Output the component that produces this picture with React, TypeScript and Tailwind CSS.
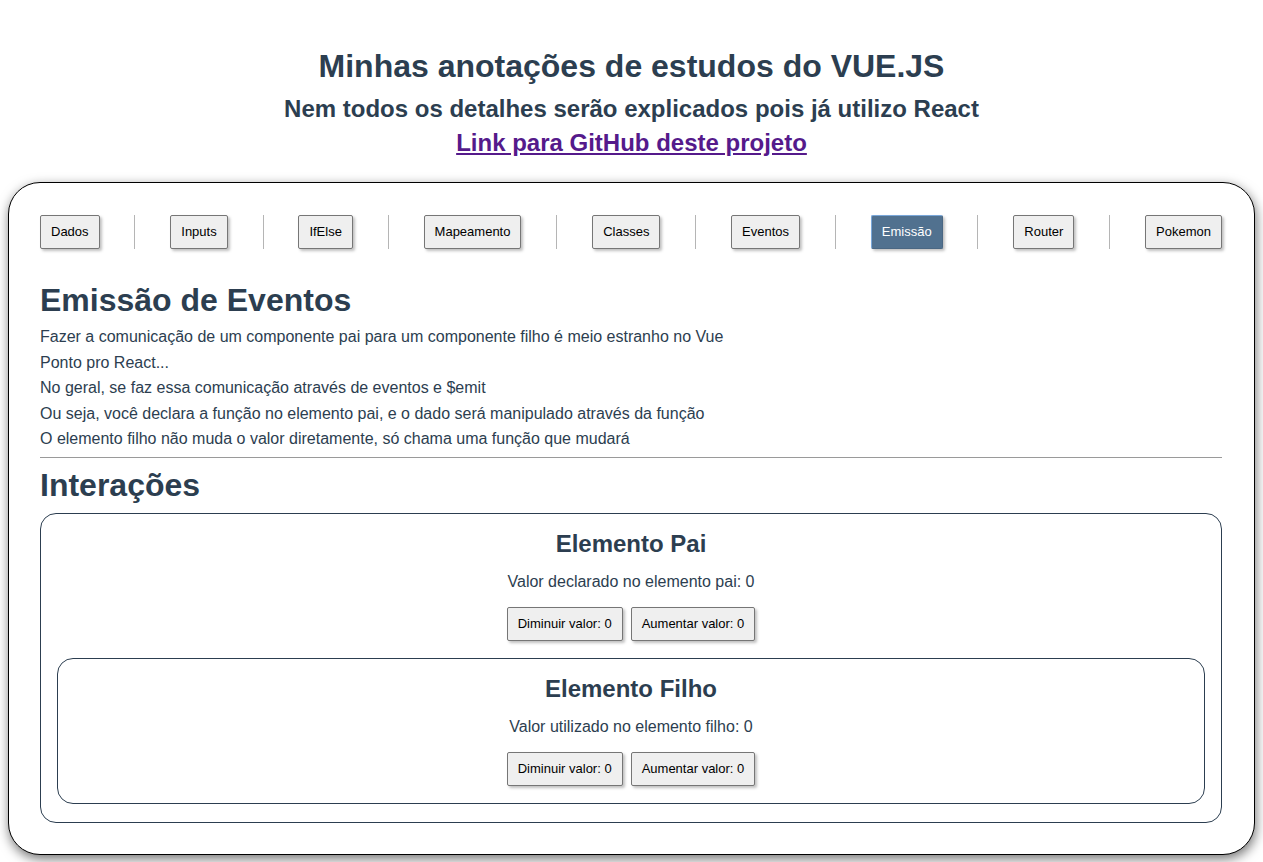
import { Fragment } from "react"

const tabs = ["Dados", "Inputs", "IfElse", "Mapeamento", "Classes", "Eventos", "Emissão", "Router", "Pokemon"]

const notes = [
  "Fazer a comunicação de um componente pai para um componente filho é meio estranho no Vue",
  "Ponto pro React...",
  "No geral, se faz essa comunicação através de eventos e $emit",
  "Ou seja, você declara a função no elemento pai, e o dado será manipulado através da função",
  "O elemento filho não muda o valor diretamente, só chama uma função que mudará",
]

function Btn({ children }: { children: React.ReactNode }) {
  return (
    <button className="h-[34px] px-[10px] text-[13px] text-black bg-[#efefef] border border-[#767676] rounded-[2px] shadow-[2px_2px_3px_rgba(0,0,0,0.25)]">
      {children}
    </button>
  )
}

function Counter({ title, label }: { title: string; label: string }) {
  return (
    <>
      <h2 className="text-[24px] leading-[28px] font-bold">{title}</h2>
      <p className="mt-[15px] text-[16px] leading-[18px]">{label}: 0</p>
      <div className="mt-[16px] flex justify-center gap-2">
        <Btn>Diminuir valor: 0</Btn>
        <Btn>Aumentar valor: 0</Btn>
      </div>
    </>
  )
}

export default function App() {
  return (
    <div className="min-h-screen bg-white text-[#2c3e50] font-['Liberation_Sans',Arial,sans-serif] pb-[7px]">
      {/* Header */}
      <header className="text-center pt-[48px]">
        <h1 className="text-[32px] leading-[37px] font-bold">Minhas anotações de estudos do VUE.JS</h1>
        <h2 className="mt-[10px] text-[24px] leading-[28px] font-bold">
          Nem todos os detalhes serão explicados pois já utilizo React
        </h2>
        <a href="#" className="inline-block mt-[6px] text-[24px] leading-[28px] font-bold text-[#551a8b] underline">
          Link para GitHub deste projeto
        </a>
      </header>

      {/* Card */}
      <main className="mx-2 mt-[24px] pt-8 pb-[31px] pl-[31px] pr-8 bg-white border border-black rounded-[32px] shadow-[1px_4px_12px_rgba(0,0,0,0.55)]">
        <nav className="flex items-center justify-between">
          {tabs.map((t, i) => (
            <Fragment key={t}>
              {i > 0 && <span className="w-px h-[34px] bg-[#b5b5b5]" />}
              {t === "Emissão" ? (
                <button className="h-[34px] px-[10px] text-[13px] text-white bg-[#51718f] border border-[#7aa7d9] border-r-[#4a6783] border-b-[#4a6783] rounded-[2px] shadow-[2px_2px_3px_rgba(0,0,0,0.25)]">
                  {t}
                </button>
              ) : (
                <Btn>{t}</Btn>
              )}
            </Fragment>
          ))}
        </nav>

        <h1 className="mt-[33px] text-[32px] leading-[37px] font-bold">Emissão de Eventos</h1>
        <div className="mt-[5px] text-[16px] leading-[25.6px]">
          {notes.map((n) => (
            <p key={n}>{n}</p>
          ))}
        </div>
        <hr className="mt-[5px] border-t border-[#9a9a9a]" />

        <h1 className="mt-[9px] text-[32px] leading-[37px] font-bold">Interações</h1>

        <section className="mt-[9px] border border-[#2c3e50] rounded-[16px] px-4 pt-4 pb-[18px] text-center">
          <Counter title="Elemento Pai" label="Valor declarado no elemento pai" />
          <div className="mt-[17px] border border-[#2c3e50] rounded-[16px] px-4 pt-4 pb-[17px]">
            <Counter title="Elemento Filho" label="Valor utilizado no elemento filho" />
          </div>
        </section>
      </main>
    </div>
  )
}
